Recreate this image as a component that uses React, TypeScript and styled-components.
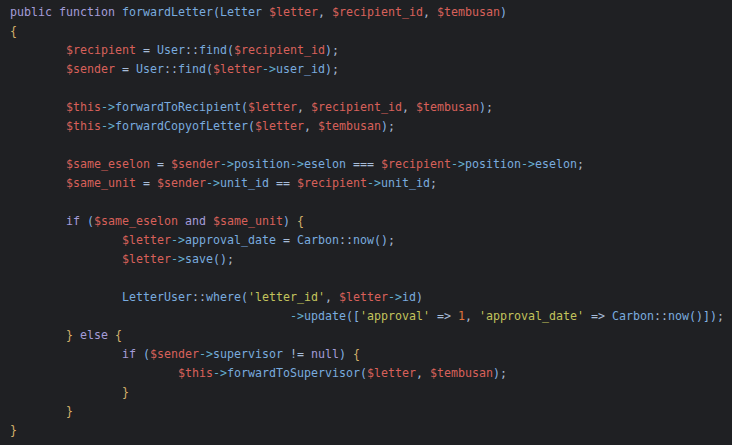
import React from "react";
import styled, { createGlobalStyle } from "styled-components";

const Global = createGlobalStyle`
  html, body { margin: 0; padding: 0; background: #1f2023; }
  body { width: 732px; height: 445px; overflow: hidden; }
`;

type Kind = "kw" | "fn" | "var" | "op" | "arrow" | "str" | "num" | "paren" | "brace" | "punc" | "plain";

const colors: Record<Kind, string> = {
  kw: "#a49cd9",
  fn: "#79abdf",
  var: "#d8605a",
  op: "#a6bcd8",
  arrow: "#63aecd",
  str: "#c2c35c",
  num: "#e0743c",
  paren: "#86b3e3",
  brace: "#d4b06a",
  punc: "#aab9cf",
  plain: "#a6bcd8",
};

const Editor = styled.div`
  width: 732px;
  height: 445px;
  box-sizing: border-box;
  padding: 3px 0 0 10px;
  background: #1f2023;
  font-family: "DejaVu Sans Mono", "Liberation Mono", monospace;
  font-size: 11.63px;
  display: flex;
  flex-direction: column;
`;

const Line = styled.div<{ $indent: number }>`
  height: 19px;
  line-height: 19px;
  white-space: pre;
  padding-left: ${(p) => p.$indent * 56}px;
`;

const Tok = styled.span<{ $k: Kind }>`
  color: ${(p) => colors[p.$k]};
`;

type T = [Kind, string];
type L = { indent: number; toks: T[] };

const v = (s: string): T => ["var", s];
const f = (s: string): T => ["fn", s];
const k = (s: string): T => ["kw", s];
const o = (s: string): T => ["op", s];
const a: T = ["arrow", "->"];
const p = (s: string): T => ["paren", s];
const b = (s: string): T => ["brace", s];
const c = (s: string): T => ["punc", s];
const st = (s: string): T => ["str", s];

const lines: L[] = [
  { indent: 0, toks: [k("public function "), f("forwardLetter"), p("("), f("Letter "), v("$letter"), c(", "), v("$recipient_id"), c(", "), v("$tembusan"), p(")")] },
  { indent: 0, toks: [b("{")] },
  { indent: 1, toks: [v("$recipient"), o(" = "), f("User"), o("::"), f("find"), p("("), v("$recipient_id"), p(")"), c(";")] },
  { indent: 1, toks: [v("$sender"), o(" = "), f("User"), o("::"), f("find"), p("("), v("$letter"), a, f("user_id"), p(")"), c(";")] },
  { indent: 0, toks: [] },
  { indent: 1, toks: [v("$this"), a, f("forwardToRecipient"), p("("), v("$letter"), c(", "), v("$recipient_id"), c(", "), v("$tembusan"), p(")"), c(";")] },
  { indent: 1, toks: [v("$this"), a, f("forwardCopyofLetter"), p("("), v("$letter"), c(", "), v("$tembusan"), p(")"), c(";")] },
  { indent: 0, toks: [] },
  { indent: 1, toks: [v("$same_eselon"), o(" = "), v("$sender"), a, f("position"), a, f("eselon"), o(" === "), v("$recipient"), a, f("position"), a, f("eselon"), c(";")] },
  { indent: 1, toks: [v("$same_unit"), o(" = "), v("$sender"), a, f("unit_id"), o(" == "), v("$recipient"), a, f("unit_id"), c(";")] },
  { indent: 0, toks: [] },
  { indent: 1, toks: [k("if "), p("("), v("$same_eselon"), k(" and "), v("$same_unit"), p(")"), o(" "), b("{")] },
  { indent: 2, toks: [v("$letter"), a, f("approval_date"), o(" = "), f("Carbon"), o("::"), f("now"), p("()"), c(";")] },
  { indent: 2, toks: [v("$letter"), a, f("save"), p("()"), c(";")] },
  { indent: 0, toks: [] },
  { indent: 2, toks: [f("LetterUser"), o("::"), f("where"), p("("), st("'letter_id'"), c(", "), v("$letter"), a, f("id"), p(")")] },
  { indent: 5, toks: [a, f("update"), p("(["), st("'approval'"), o(" => "), ["num", "1"], c(", "), st("'approval_date'"), o(" => "), f("Carbon"), o("::"), f("now"), p("()])"), c(";")] },
  { indent: 1, toks: [b("}"), k(" else "), b("{")] },
  { indent: 2, toks: [k("if "), p("("), v("$sender"), a, f("supervisor"), o(" != "), k("null"), p(")"), o(" "), b("{")] },
  { indent: 3, toks: [v("$this"), a, f("forwardToSupervisor"), p("("), v("$letter"), c(", "), v("$tembusan"), p(")"), c(";")] },
  { indent: 2, toks: [b("}")] },
  { indent: 1, toks: [b("}")] },
  { indent: 0, toks: [b("}")] },
];

export default function App() {
  return (
    <>
      <Global />
      <Editor>
        {lines.map((ln, i) => (
          <Line key={i} $indent={ln.indent}>
            {ln.toks.length === 0 ? " " : ln.toks.map(([kind, s], j) => (
              <Tok key={j} $k={kind}>{s}</Tok>
            ))}
          </Line>
        ))}
      </Editor>
    </>
  );
}
